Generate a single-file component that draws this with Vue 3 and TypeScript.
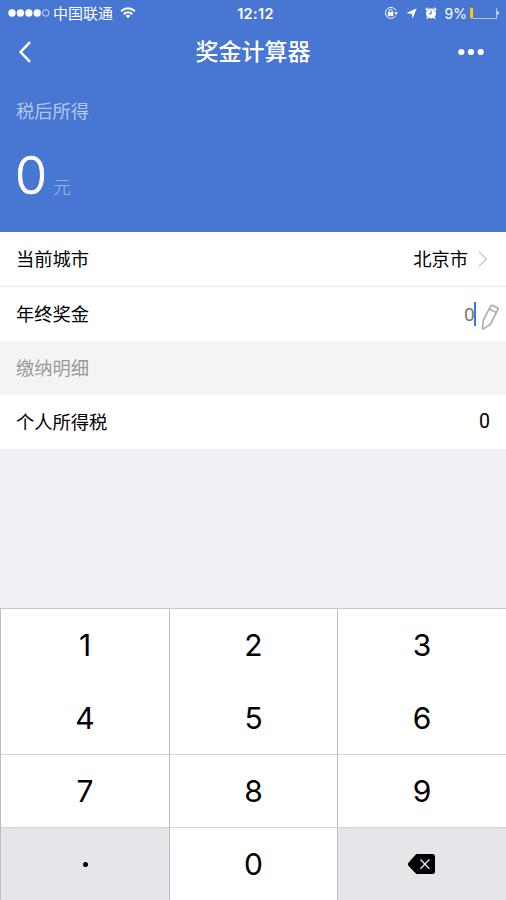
<script setup lang="ts">
interface Key {
  label: string
  kind?: 'dot' | 'delete'
}

const keys: Key[] = [
  ...['1', '2', '3', '4', '5', '6', '7', '8', '9'].map((label) => ({ label })),
  { label: '', kind: 'dot' },
  { label: '0' },
  { label: '', kind: 'delete' },
]
</script>

<template>
  <main class="screen">
    <section class="hero">
      <div class="status">
        <div class="status-left">
          <svg class="signal" width="42" height="10" viewBox="0 0 42 10">
            <circle cx="4" cy="5" r="3.7" fill="#fff" />
            <circle cx="12.4" cy="5" r="3.7" fill="#fff" />
            <circle cx="20.8" cy="5" r="3.7" fill="#fff" />
            <circle cx="29.2" cy="5" r="3.7" fill="#fff" />
            <circle cx="37.7" cy="5" r="3.3" fill="none" stroke="#fff" stroke-width=".7" />
          </svg>
          <span class="carrier">中国联通</span>
          <svg class="wifi" width="16" height="12" viewBox="0 0 16 12" fill="none" stroke="#fff" stroke-width="1.9">
            <path d="M1 4.3Q8 -1.8 15 4.3M3.6 7.2Q8 3.5 12.4 7.2" />
            <path d="M5.7 8.7Q8 7 10.3 8.7L8 11.2Z" fill="#fff" stroke="none" />
          </svg>
        </div>
        <span class="time">12:12</span>
        <div class="status-right">
          <svg class="lock" width="14" height="14" viewBox="0 0 14 14" fill="none" stroke="#fff">
            <path d="M11.7 9.7A5.5 5.5 0 1 1 12 4.7" stroke-width="1" />
            <path d="M10 6.2h4L12 9z" fill="#fff" stroke="none" />
            <rect x="3.9" y="6" width="5.4" height="4.1" fill="#fff" stroke="none" />
            <path d="M5 6.2V5a1.6 1.6 0 0 1 3.2 0v1.2" stroke-width="1" />
          </svg>
          <svg class="arrow" width="11" height="11" viewBox="0 0 11 11">
            <path d="M10.8 .2 6.5 10.6 5.8 5.9 .3 5z" fill="#fff" />
          </svg>
          <svg class="alarm" width="12" height="12" viewBox="0 0 12 12">
            <circle cx="6" cy="6.4" r="5" fill="#fff" />
            <path d="M.7 2.8 3 .9M9 .9l2.3 1.9M2.7 10.5 1.7 11.7M9.3 10.5l1 1.2" stroke="#fff" stroke-width="1.5" />
            <path d="M6.1 3.4v3.3H3.9" fill="none" stroke="#4876d3" stroke-width="1.1" />
          </svg>
          <span class="percent">9%</span>
          <svg class="battery" width="30" height="12" viewBox="0 0 30 12">
            <path d="M3 11.5H26.5V1" fill="none" stroke="#fff" stroke-opacity=".65" stroke-width=".9" />
            <rect x=".2" y=".7" width="2.8" height="10.6" fill="#fc0" />
            <path d="M27.7 4q1.4 2 0 4z" fill="#fff" stroke="#fff" stroke-width=".6" />
          </svg>
        </div>
      </div>

      <header class="nav">
        <svg class="back" width="14" height="24" viewBox="0 0 14 24">
          <path d="M12 2.2 2.6 12 12 21.8" fill="none" stroke="#fff" stroke-width="2.5" />
        </svg>
        <h1>奖金计算器</h1>
        <svg class="more" width="26" height="8" viewBox="0 0 26 8" fill="#fff">
          <circle cx="3.3" cy="4" r="3.1" />
          <circle cx="13" cy="4" r="3.1" />
          <circle cx="22.7" cy="4" r="3.1" />
        </svg>
      </header>

      <div class="result">
        <div class="caption">税后所得</div>
        <div class="amount"><span class="value">0</span><span class="unit">元</span></div>
      </div>
    </section>

    <section class="form">
      <div class="row city">
        <span>当前城市</span>
        <div class="field">
          <span>北京市</span>
          <svg class="chevron" width="10" height="16" viewBox="0 0 10 16">
            <path d="M1 1 8.5 8 1 15" fill="none" stroke="#c4c4c6" stroke-width="1.2" />
          </svg>
        </div>
      </div>
      <div class="row bonus">
        <span>年终奖金</span>
        <div class="field">
          <span class="placeholder">0</span>
          <i class="caret"></i>
          <svg class="pencil" width="19" height="26" viewBox="0 0 19 26" fill="none" stroke="#aaa" stroke-width="1.6" stroke-linejoin="round">
            <path d="M9.7 2.2Q10.3 1 11.6 1.5L16.3 3.7Q17.5 4.4 16.9 5.6L9.3 20.4 2.4 24.8Q1.4 24.9 1.5 23.7L2.3 16.2Z" />
            <path d="M8.3 5.1 15.3 8.6" />
          </svg>
        </div>
      </div>
      <div class="row detail"><span>缴纳明细</span></div>
      <div class="row tax"><span>个人所得税</span><span class="number">0</span></div>
    </section>

    <div class="space"></div>

    <section class="keypad">
      <button v-for="(key, i) in keys" :key="i" type="button" class="key" :class="key.kind">
        <i v-if="key.kind === 'dot'" class="point"></i>
        <svg v-else-if="key.kind === 'delete'" width="28" height="20" viewBox="0 0 28 20">
          <path d="M9.2 0H24.2Q27 0 27 2.8V17.2Q27 20 24.2 20H9.2Q8.2 20 7.3 19.1L.7 12Q-.8 10.2.7 8.4L7.3 1Q8.2 0 9.2 0Z" fill="#000" />
          <path d="M12.5 5.6 21.3 14.7M21.3 5.6 12.5 14.7" stroke="#e6e5ea" stroke-width="1.4" />
        </svg>
        <template v-else>{{ key.label }}</template>
      </button>
    </section>
  </main>
</template>

<style>
body {
  margin: 0;
}
</style>

<style scoped>
.screen {
  display: flex;
  flex-direction: column;
  width: 506px;
  height: 900px;
  overflow: hidden;
  background: #efeff4;
  color: #000;
  font-family: Inter, "Noto Sans CJK SC", sans-serif;
}
svg {
  display: block;
  flex: none;
}
.hero {
  height: 232px;
  flex: none;
  background: #4876d3;
  color: #fff;
}
.status {
  display: grid;
  grid-template-columns: 1fr auto 1fr;
  align-items: center;
  height: 25px;
  padding-left: 5px;
}
.status-left,
.status-right {
  display: flex;
  align-items: center;
}
.status-left {
  padding-left: 3px;
}
.carrier {
  margin-left: 3px;
  padding-top: 1px;
  font-size: 15px;
  line-height: 25px;
}
.wifi {
  margin-left: 7px;
}
.time {
  font-size: 14.5px;
  font-weight: 600;
  letter-spacing: 0.35px;
}
.status-right {
  justify-content: flex-end;
  padding-right: 6px;
}
.arrow {
  margin-left: 8px;
}
.alarm {
  margin-left: 8px;
}
.percent {
  margin-left: 8px;
  font-size: 14px;
}
.battery {
  margin-left: 3px;
}
.nav {
  display: grid;
  grid-template-columns: 1fr auto 1fr;
  align-items: center;
  height: 53px;
  padding: 0 22px 0 18px;
}
h1 {
  margin: 0 -2px 0 2px;
  font-size: 23px;
  font-weight: 500;
  line-height: 34px;
}
.more {
  justify-self: end;
}
.result {
  padding: 19px 16px 0;
}
.caption {
  font-size: 18.3px;
  line-height: 28px;
  color: #b4c7ee;
}
.amount {
  display: flex;
  align-items: baseline;
  height: 72px;
  line-height: 102px;
}
.value {
  font-size: 52px;
  width: 32px;
  margin-left: -1px;
  font-weight: 300;
  -webkit-text-stroke: 0.7px #fff;
}
.unit {
  margin-left: 6px;
  font-size: 18px;
  font-weight: 300;
  line-height: 28px;
  color: #a6bcea;
}
.form {
  flex: none;
  background: #fff;
}
.row {
  box-sizing: border-box;
  display: flex;
  align-items: center;
  justify-content: space-between;
  height: 54px;
  padding: 0 16px;
  font-size: 18.3px;
  line-height: 28px;
}
.city {
  height: 55px;
  border-bottom: 1px solid #e9e9eb;
}
.field {
  display: flex;
  align-items: center;
}
.city .field {
  margin-right: 2px;
}
.chevron {
  margin-left: 10px;
}
.bonus {
  padding-right: 6px;
}
.placeholder {
  width: 10px;
  padding-top: 2px;
  color: #777;
  font-family: Roboto, sans-serif;
  font-size: 19px;
}
.caret {
  width: 2px;
  height: 24px;
  background: #4170ed;
}
.pencil {
  margin: 5px 0 0 5px;
}
.detail {
  background: #f4f4f4;
  color: #999;
}
.number {
  font-family: Roboto, sans-serif;
  font-size: 19.5px;
}
.space {
  flex: 1;
}
.keypad {
  display: grid;
  box-sizing: border-box;
  flex: none;
  height: 292px;
  grid-template-columns: 169px 168px 168px;
  grid-template-rows: 72px 73px 73px 73px;
  border-top: 1px solid #cacacc;
  border-left: 1px solid #bdbdc0;
}
.key {
  display: flex;
  align-items: center;
  justify-content: center;
  margin: 0;
  padding: 0;
  border: 0;
  border-right: 1px solid #bcbcbf;
  border-radius: 0;
  background: #fff;
  color: #000;
  font-family: Inter, sans-serif;
  font-size: 30px;
}
.key:nth-child(3n) {
  border-right: 0;
}
.key:nth-child(n + 4):nth-child(-n + 6) {
  padding-top: 1px;
}
.key:nth-child(n + 7) {
  border-top: 1px solid #d5d5d7;
}
.dot,
.delete {
  background: #e6e5ea;
}
.point {
  width: 5px;
  height: 5px;
  border-radius: 50%;
  background: #000;
}
</style>
